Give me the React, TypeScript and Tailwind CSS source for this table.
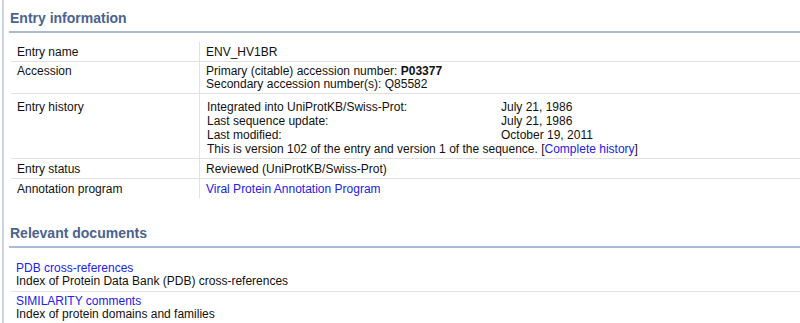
import React from "react";

type Row = { label: string; value: React.ReactNode; pad?: string };

const link = "text-[#2121e8]";

function History() {
  const items = [
    ["Integrated into UniProtKB/Swiss-Prot:", "July 21, 1986"],
    ["Last sequence update:", "July 21, 1986"],
    ["Last modified:", "October 19, 2011"],
  ];
  return (
    <div className="pl-[1px]">
      {items.map(([k, v]) => (
        <div key={k} className="flex">
          <span className="w-[294px] shrink-0">{k}</span>
          <span>{v}</span>
        </div>
      ))}
      <div>
        This is version 102 of the entry and version 1 of the sequence. [
        <a className={link}>Complete history</a>]
      </div>
    </div>
  );
}

const rows: Row[] = [
  { label: "Entry name", value: "ENV_HV1BR" },
  {
    label: "Accession",
    pad: "pt-[3px] pb-[2px] leading-[13px]",
    value: (
      <>
        <div>
          Primary (citable) accession number: <b>P03377</b>
        </div>
        <div>Secondary accession number(s): Q85582</div>
      </>
    ),
  },
  { label: "Entry history", value: <History />, pad: "pt-[6px] pb-[2px]" },
  { label: "Entry status", value: "Reviewed (UniProtKB/Swiss-Prot)" },
  {
    label: "Annotation program",
    value: <a className={link}>Viral Protein Annotation Program</a>,
  },
];

const docs = [
  ["PDB cross-references", "Index of Protein Data Bank (PDB) cross-references"],
  ["SIMILARITY comments", "Index of protein domains and families"],
];

function Heading({ children }: { children: React.ReactNode }) {
  return (
    <h2 className="border-b-2 border-[#a9bcd3] pl-[1px] pb-[4px] text-[14px] font-bold leading-[17px] text-[#4a6390]">
      {children}
    </h2>
  );
}

export default function App() {
  return (
    <div className="h-[323px] w-[800px] overflow-hidden bg-white font-['Liberation_Sans',Arial,sans-serif] text-[12px] leading-[14px] text-[#111]">
      <div className="ml-[2px] h-full border-l-2 border-[#c9d5e2] pl-[5px] pt-[10px]">
        <Heading>Entry information</Heading>

        <div className="ml-[2px] mt-[9px]">
          {rows.map((r, i) => (
            <div
              key={r.label}
              className={`flex ${i < rows.length - 1 ? "border-b border-[#e2e2e2]" : ""}`}
            >
              <div className={`w-[188px] shrink-0 pl-[6px] ${r.pad ?? "pt-[3px] pb-[2px]"}`}>
                {r.label}
              </div>
              <div className={`flex-1 border-l border-[#e2e2e2] pl-[6px] ${r.pad ?? "pt-[3px] pb-[2px]"}`}>
                {r.value}
              </div>
            </div>
          ))}
        </div>

        <div className="mt-[27px]">
          <Heading>Relevant documents</Heading>
        </div>

        <div className="ml-[2px] mt-[14px] leading-[13px]">
          {docs.map(([title, desc], i) => (
            <div
              key={title}
              className={`pl-[5px] ${i === 0 ? "border-b border-[#e2e2e2] pb-[3px]" : "pt-[3px]"}`}
            >
              <a className={`block ${link}`}>{title}</a>
              <div>{desc}</div>
            </div>
          ))}
        </div>
      </div>
    </div>
  );
}
